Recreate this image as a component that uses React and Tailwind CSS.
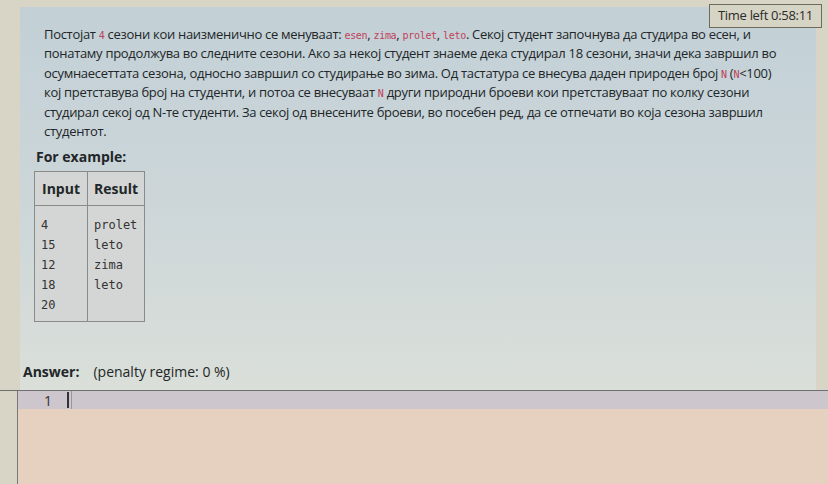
import React from "react";

const lines = [
  [
    "Постојат ",
    { c: "4" },
    " сезони кои наизменично се менуваат: ",
    { c: "esen" },
    ", ",
    { c: "zima" },
    ", ",
    { c: "prolet" },
    ", ",
    { c: "leto" },
    ". Секој студент започнува да студира во есен, и",
  ],
  ["понатаму продолжува во следните сезони. Ако за некој студент знаеме дека студирал 18 сезони, значи дека завршил во"],
  [
    "осумнаесеттата сезона, односно завршил со студирање во зима. Од тастатура се внесува даден природен број ",
    { c: "N" },
    " (",
    { c: "N" },
    "<100)",
  ],
  [
    "кој претставува број на студенти, и потоа се внесуваат ",
    { c: "N" },
    " други природни броеви кои претставуваат по колку сезони",
  ],
  ["студирал секој од N-те студенти. За секој од внесените броеви, во посебен ред, да се отпечати во која сезона завршил"],
  ["студентот."],
];

const rows = [
  ["4", "prolet"],
  ["15", "leto"],
  ["12", "zima"],
  ["18", "leto"],
  ["20", ""],
];

function Code({ children }) {
  return (
    <code className="font-['DejaVu_Sans_Mono',monospace] text-[10px] leading-none text-[#c0415a]">
      {children}
    </code>
  );
}

export default function App() {
  return (
    <div className="h-[484px] w-[828px] overflow-hidden bg-[#d9d5c6] font-['Open_Sans',sans-serif] text-[#222628]">
      <div className="relative ml-[20px] mr-[12px] mt-[7px] flex h-[383px] flex-col bg-linear-to-b from-[#c2d0d6] via-[#ccd6d9] to-[#dadfd9] pl-[24px] pt-[18px]">
        <div className="absolute right-[-6px] top-[-3px] border border-[#6d6b5c] bg-[#d6d4c4] px-[8px] py-[1px] text-[13px] tracking-[-0.3px] text-[#2b2b2b]">
          Time left 0:58:11
        </div>

        <div className="text-[13px] leading-[19.4px] tracking-[-0.3px]">
          {lines.map((parts, i) => (
            <div key={i} className="whitespace-nowrap">
              {parts.map((p, j) =>
                typeof p === "string" ? <span key={j}>{p}</span> : <Code key={j}>{p.c}</Code>
              )}
            </div>
          ))}
        </div>

        <div className="ml-[-8px] mt-[5px] text-[14px] font-bold">For example:</div>

        <table className="ml-[-10px] mt-[4px] w-[108px] border-collapse border border-[#888b88] bg-[#d3d6d4]">
          <thead>
            <tr className="h-[34px] border-b border-[#888b88] text-[14px] font-bold">
              <th className="w-[54px] border-r border-[#888b88] px-[7px] py-0 text-left">Input</th>
              <th className="px-[6px] py-0 text-left">Result</th>
            </tr>
          </thead>
          <tbody className="font-['DejaVu_Sans_Mono',monospace] text-[12px] text-[#333]">
            <tr>
              <td className="border-r border-[#888b88] px-[6px] pb-[6px] pt-[9px] align-top leading-[20px]">
                {rows.map(([a]) => (
                  <div key={a}>{a}</div>
                ))}
              </td>
              <td className="px-[6px] pb-[6px] pt-[9px] align-top leading-[20px]">
                {rows.map(([a, b]) => (
                  <div key={a}>{b || "\u00a0"}</div>
                ))}
              </td>
            </tr>
          </tbody>
        </table>

        <div className="ml-[-21px] mt-auto mb-[8px] flex items-baseline gap-[14px] text-[14px]">
          <span className="font-bold">Answer:</span>
          <span>(penalty regime: 0 %)</span>
        </div>
      </div>

      <div className="h-px bg-[#6f7070]" />
      <div className="ml-[17px] flex h-full border-l border-[#777] bg-[#e6d1c0]">
        <div className="flex h-[18px] w-full items-center bg-[#cdc6cc]">
          <span className="w-[34px] text-right text-[14px] text-[#333]">1</span>
          <span className="ml-[15px] h-[16px] w-[2px] bg-[#333]" />
          <span className="ml-[2px] h-[18px] w-px bg-[#999]" />
        </div>
      </div>
    </div>
  );
}
